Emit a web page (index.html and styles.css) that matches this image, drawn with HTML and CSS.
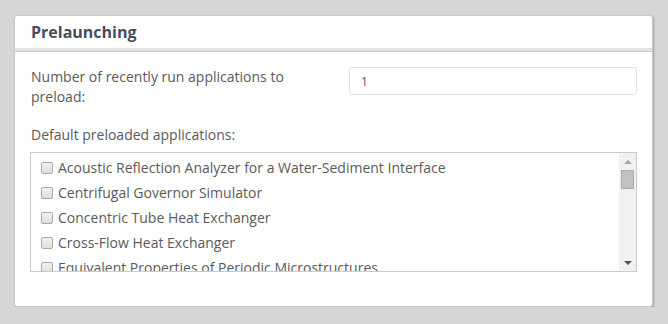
FILE: index.html
```html
<!DOCTYPE html>
<html lang="en">

<head>
  <meta charset="UTF-8">
  <title>Prelaunching</title>
  <link rel="stylesheet" href="styles.css">
</head>

<body>
  <div class="panel">
    <div class="panel-heading">
      <h2>Prelaunching</h2>
    </div>
    <div class="panel-body">
      <div class="form-row">
        <label for="recentCount">Number of recently run applications to preload:</label>
        <input type="text" id="recentCount" value="1">
      </div>
      <p class="list-label">Default preloaded applications:</p>
      <div class="app-list">
        <div class="app-items">
          <label><input type="checkbox"> Acoustic Reflection Analyzer for a Water-Sediment Interface</label>
          <label><input type="checkbox"> Centrifugal Governor Simulator</label>
          <label><input type="checkbox"> Concentric Tube Heat Exchanger</label>
          <label><input type="checkbox"> Cross-Flow Heat Exchanger</label>
          <label><input type="checkbox"> Equivalent Properties of Periodic Microstructures</label>
        </div>
        <!-- scrollbar drawn by hand, headless chrome hides the native one -->
        <div class="scrollbar">
          <div class="scroll-btn"><span class="arrow-up"></span></div>
          <div class="scroll-track">
            <div class="scroll-thumb"></div>
          </div>
          <div class="scroll-btn"><span class="arrow-down"></span></div>
        </div>
      </div>
    </div>
  </div>
</body>

</html>
```

FILE: styles.css
```css
body {
  font-family: "Open Sans", Arial, sans-serif;
  margin: 0;
  padding: 15px 15px 0 14px;
  background-color: #d6d6d6;
  color: #5a5a5a;
}

.panel {
  width: 637px;
  background-color: #fff;
  border: 1px solid #c8c8c8;
  border-radius: 3px;
  box-shadow: 1px 1px 2px rgba(0, 0, 0, 0.25);
}

.panel-heading {
  height: 32px;
  padding: 0 16px;
  border-bottom: 3px solid #e4e4e4;
  display: flex;
  align-items: center;
}

.panel-heading h2 {
  margin: 0;
  font-size: 16px;
  font-weight: 700;
  color: #484c5e;
}

.panel-body {
  border-top: 1px solid #c9c9c9;
  padding: 15px 15px 34px 16px;
}

.form-row {
  display: grid;
  grid-template-columns: 318px 1fr;
  align-items: start;
}

.form-row label {
  font-size: 14px;
  line-height: 20px;
  padding-right: 30px;
}

input[type="text"] {
  height: 28px;
  box-sizing: border-box;
  border: 1px solid #e2e2e2;
  border-radius: 3px;
  padding: 0 11px;
  font-family: inherit;
  font-size: 12px;
  color: #555;
  outline: none;
}

.list-label {
  margin: 18px 0 7px;
  font-size: 14px;
  line-height: 20px;
}

.app-list {
  height: 120px;
  box-sizing: border-box;
  margin-left: -1px;
  border: 1px solid #cbcbcb;
  display: flex;
}

.app-items {
  flex: 1;
  overflow: hidden;
  padding: 2px 0 0 10px;
}

.app-items label {
  display: flex;
  align-items: center;
  height: 25px;
  font-size: 14px;
  white-space: nowrap;
}

.app-items input[type="checkbox"] {
  appearance: none;
  width: 12px;
  height: 12px;
  margin: 1px 5px 0 0;
  border: 1px solid #a9a9a9;
  border-radius: 2px;
  background: linear-gradient(#f2f2f2, #dedede);
  flex-shrink: 0;
}

/* fake scrollbar */
.scrollbar {
  width: 17px;
  background-color: #f1f1f1;
  display: flex;
  flex-direction: column;
}

.scroll-btn {
  height: 17px;
  display: flex;
  align-items: center;
  justify-content: center;
}

.arrow-up {
  border-left: 4px solid transparent;
  border-right: 4px solid transparent;
  border-bottom: 4px solid #a3a3a3;
}

.arrow-down {
  border-left: 4px solid transparent;
  border-right: 4px solid transparent;
  border-top: 4px solid #505050;
}

.scroll-track {
  flex: 1;
  padding: 0 2px;
}

.scroll-thumb {
  height: 19px;
  box-sizing: border-box;
  background-color: #c1c1c1;
  border: 1px solid #acacac;
}
```
